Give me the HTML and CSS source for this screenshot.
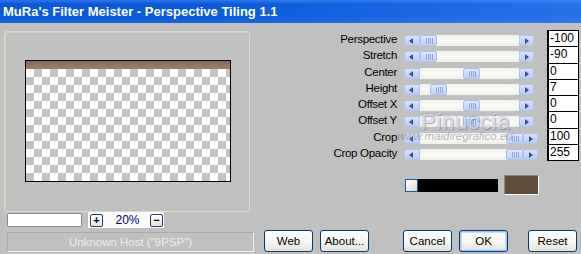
FILE: index.html
```html
<!DOCTYPE html>
<html>
<head>
<meta charset="utf-8">
<link rel="stylesheet" href="styles.css">
</head>
<body>
<div class="window">
  <div class="titlebar">MuRa's Filter Meister - Perspective Tiling 1.1</div>
  <div class="body">
    <div class="left">
      <div class="group">
        <div class="preview"><div class="strip"></div><div class="checker"></div></div>
      </div>
      <div class="zoomrow">
        <div class="zoomfield"></div>
        <div class="zoomctl">
          <span class="mini">+</span>
          <span class="pct">20%</span>
          <span class="mini">&minus;</span>
        </div>
      </div>
    </div>
    <div class="right">
      <div class="ctrls">
        <div class="lbl">Perspective</div>
        <div class="slider"><span class="arr l"></span><span class="track"><span class="thumb" style="margin-left:0px"></span></span><span class="arr r"></span></div>
        <div class="val">-100</div>

        <div class="lbl">Stretch</div>
        <div class="slider"><span class="arr l"></span><span class="track"><span class="thumb" style="margin-left:0px"></span></span><span class="arr r"></span></div>
        <div class="val">-90</div>

        <div class="lbl">Center</div>
        <div class="slider"><span class="arr l"></span><span class="track"><span class="thumb" style="margin-left:43px"></span></span><span class="arr r"></span></div>
        <div class="val">0</div>

        <div class="lbl">Height</div>
        <div class="slider"><span class="arr l"></span><span class="track"><span class="thumb" style="margin-left:10px"></span></span><span class="arr r"></span></div>
        <div class="val">7</div>

        <div class="lbl">Offset X</div>
        <div class="slider"><span class="arr l"></span><span class="track"><span class="thumb" style="margin-left:43px"></span></span><span class="arr r"></span></div>
        <div class="val">0</div>

        <div class="lbl">Offset Y</div>
        <div class="slider"><span class="arr l"></span><span class="track"><span class="thumb" style="margin-left:43px"></span></span><span class="arr r"></span></div>
        <div class="val">0</div>

        <div class="lbl">Crop</div>
        <div class="slider"><span class="arr l"></span><span class="track"><span class="thumb" style="margin-left:86px"></span></span><span class="arr r"></span></div>
        <div class="val">100</div>

        <div class="lbl">Crop Opacity</div>
        <div class="slider"><span class="arr l"></span><span class="track"><span class="thumb" style="margin-left:86px"></span></span><span class="arr r"></span></div>
        <div class="val">255</div>
      </div>
      <div class="swatches">
        <span class="sw-white"></span><span class="sw-black"></span><span class="sw-brown"></span>
      </div>
      <div class="watermark">
        <div class="wm-big">Pinuccia</div>
        <div class="wm-small">www.maidiregrafico.eu</div>
      </div>
    </div>
    <div class="status">Unknown Host ("9PSP")</div>
    <div class="buttons">
      <button class="btn">Web</button>
      <button class="btn">About...</button>
      <button class="btn gap-big">Cancel</button>
      <button class="btn default">OK</button>
      <button class="btn gap-mid">Reset</button>
    </div>
  </div>
</div>
</body>
</html>
```
FILE: styles.css
```css
* { box-sizing: border-box; }
html, body { margin: 0; padding: 0; }
body {
  width: 581px;
  height: 254px;
  overflow: hidden;
  background: #c0c0c0;
  font-family: "Liberation Sans", Arial, sans-serif;
  font-size: 11px;
  color: #000;
}
.window { width: 581px; height: 254px; display: flex; flex-direction: column; }
.titlebar {
  height: 23px;
  flex: none;
  padding-left: 3px;
  line-height: 23px;
  color: #fff;
  font-weight: bold;
  font-size: 13px;
  white-space: nowrap;
  background:
    linear-gradient(90deg, rgba(255,255,255,0) 35%, rgba(90,160,255,0.35) 100%),
    linear-gradient(180deg, #2a78ec 0%, #0b58d8 18%, #0a5bdc 70%, #1566e4 100%);
}
.body {
  flex: 1;
  display: grid;
  grid-template-columns: 254px 1fr;
  grid-template-rows: 205px 26px;
}
.left { padding: 8px 0 0 4px; }
.group {
  width: 246px;
  height: 181px;
  border: 1px solid #dcd9c6;
  box-shadow: inset 1px 1px 0 #d0cdba;
  border-radius: 3px;
  padding: 28px 0 0 20px;
}
.preview {
  width: 206px;
  height: 122px;
  border: 1px solid #000;
  display: flex;
  flex-direction: column;
}
.strip {
  height: 8px;
  flex: none;
  background: linear-gradient(180deg, #866a58, #9a7f6c);
}
.checker {
  flex: 1;
  background: conic-gradient(#c3c3c3 25%, #fff 0 50%, #c3c3c3 0 75%, #fff 0);
  background-size: 16px 16px;
}
.zoomrow {
  display: flex;
  align-items: center;
  margin-left: 3px;
  height: 16px;
}
.zoomfield {
  width: 75px;
  height: 14px;
  background: #fff;
  border: 1px solid #8a8a8a;
  border-radius: 2px;
}
.zoomctl {
  margin-left: 6px;
  width: 76px;
  height: 16px;
  background: #fbfbfb;
  display: flex;
  align-items: center;
  padding-left: 2px;
}
.mini {
  width: 13px;
  height: 13px;
  border: 1px solid #1c3f78;
  border-radius: 2px;
  background: linear-gradient(180deg, #fff, #e6e4da);
  display: flex;
  align-items: center;
  justify-content: center;
  font-weight: bold;
  font-size: 11px;
  line-height: 1;
}
.pct {
  color: #00007a;
  width: 47px;
  text-align: center;
  font-size: 12px;
  padding-left: 2px;
}
.right { padding-top: 8px; position: relative; }
.ctrls {
  display: grid;
  grid-template-columns: 150px 130px 32px;
  grid-auto-rows: 16.25px;
}
.lbl {
  padding-right: 7px;
  text-align: right;
  white-space: nowrap;
  letter-spacing: -0.3px;
  font-size: 11.5px;
  line-height: 17px;
}
.slider {
  display: flex;
  height: 11px;
  margin-top: 4px;
}
.arr {
  width: 16px;
  height: 11px;
  flex: none;
  background: linear-gradient(180deg, #d7e2fb, #bccdf5);
  border: 1px solid #b2c4ee;
  border-radius: 2px;
  position: relative;
}
.arr.r { width: 15px; }
.arr::after {
  content: "";
  position: absolute;
  top: 2px;
  width: 0; height: 0;
  border-top: 3px solid transparent;
  border-bottom: 3px solid transparent;
}
.arr.l::after { left: 4px; border-right: 4px solid #3d5280; }
.arr.r::after { left: 5px; border-left: 4px solid #3d5280; }
.track {
  flex: 1;
  display: flex;
  background: linear-gradient(180deg, #f2f1ea, #fbfbf8 50%, #f0efe7);
}
.thumb {
  width: 17px;
  height: 11px;
  border: 1px solid #a9bdef;
  border-radius: 2px;
  background:
    repeating-linear-gradient(90deg, transparent 0 1px, #8ea6de 1px 2px) 4px 2px / 8px 6px no-repeat,
    linear-gradient(180deg, #dde7fd, #c0d1f7);
}
.val {
  width: 32px;
  background: #fff;
  border: 1px solid #000;
  border-left: 2px solid #000;
  margin-top: -1px;
  height: 17.25px;
  font-size: 12px;
  line-height: 15px;
  padding-left: 1px;
  margin-left: 13px;
}
.swatches {
  display: flex;
  align-items: center;
  margin-top: 14px;
  margin-left: 151px;
}
.sw-white {
  width: 13px; height: 13px;
  border: 1px solid #1d5a96;
  background: linear-gradient(135deg, #fff, #dcdcdc);
}
.sw-black { width: 80px; height: 13px; background: #000; }
.sw-brown {
  margin-left: 6px;
  width: 35px; height: 20px;
  background: #5f4c39;
  border: 1px solid #8e8572;
  border-right-color: #fff;
  border-bottom-color: #fff;
}
.watermark {
  position: absolute;
  left: 143px;
  top: 88px;
  pointer-events: none;
}
.wm-big {
  margin-left: 24px;
  font-size: 22px;
  letter-spacing: 0.8px;
  color: rgba(238,240,248,0.6);
  text-shadow: 1px 1px 1px rgba(70,90,140,0.5), -1px -1px 0 rgba(120,130,160,0.25);
  line-height: 22px;
}
.wm-small {
  font-size: 11.5px;
  font-style: italic;
  color: rgba(110,110,120,0.5);
  line-height: 12px;
  margin-top: -3px;
}
.status {
  margin: 4px 0 0 7px;
  width: 247px;
  height: 20px;
  border: 1px solid;
  border-color: #a9a9a9 #ededed #ededed #a9a9a9;
  color: #ececec;
  text-align: center;
  font-size: 11.5px;
  line-height: 18px;
}
.buttons {
  display: flex;
  padding: 2px 0 0 10px;
  gap: 7px;
}
.btn {
  width: 49px;
  height: 22px;
  padding: 0;
  font-family: "Liberation Sans", Arial, sans-serif;
  font-size: 11.5px;
  color: #000;
  border: 1px solid #003c74;
  border-radius: 3px;
  background: linear-gradient(180deg, #ffffff 0%, #f5f4ef 60%, #e3e1d6 100%);
}
.btn.gap-big { margin-left: 27px; }
.btn.gap-mid { margin-left: 13px; }
.btn.default { box-shadow: inset 0 0 0 1px #a9c3f2, inset 0 0 0 2px #cfdcf7; }
```
